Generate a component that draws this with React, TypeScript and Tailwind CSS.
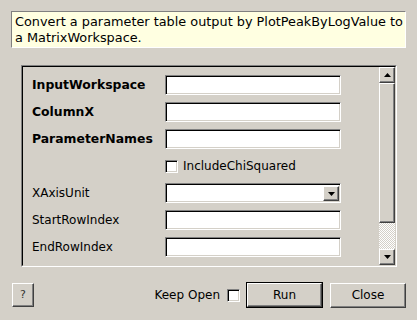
import React from 'react';

const sunken =
  'border border-t-[#808080] border-l-[#808080] border-b-white border-r-white shadow-[inset_1px_1px_0_#000,inset_-1px_-1px_0_#d4d0c8]';
const raised =
  'border border-t-white border-l-white border-b-[#404040] border-r-[#404040] shadow-[inset_-1px_-1px_0_#808080]';

function Arrow({ up }: { up?: boolean }) {
  return (
    <svg width="7" height="4" viewBox="0 0 7 4">
      <polygon points={up ? '3.5,0 7,4 0,4' : '0,0 7,0 3.5,4'} fill="#000" />
    </svg>
  );
}

function Field() {
  return <div className={`w-[176px] h-[20px] bg-white ${sunken}`} />;
}

function Combo() {
  return (
    <div className={`w-[176px] h-[20px] bg-white flex justify-end items-stretch p-[1px] pt-[2px] pl-[2px] ${sunken}`}>
      <div className={`w-[16px] bg-[#d4d0c8] flex items-center justify-center ${raised}`}>
        <Arrow />
      </div>
    </div>
  );
}

function CheckBox() {
  return <div className={`w-[13px] h-[13px] bg-white ${sunken}`} />;
}

const rows: { label: string; bold?: boolean; kind: 'field' | 'check' | 'combo' }[] = [
  { label: 'InputWorkspace', bold: true, kind: 'field' },
  { label: 'ColumnX', bold: true, kind: 'field' },
  { label: 'ParameterNames', bold: true, kind: 'field' },
  { label: '', kind: 'check' },
  { label: 'XAxisUnit', kind: 'combo' },
  { label: 'StartRowIndex', kind: 'field' },
  { label: 'EndRowIndex', kind: 'field' },
];

export default function App() {
  return (
    <div
      className="w-[417px] h-[320px] bg-[#d4d0c8] overflow-hidden text-[12px] text-black"
      style={{ fontFamily: '"DejaVu Sans", Verdana, sans-serif' }}
    >
      {/* description */}
      <div className="pt-[11px] pl-[11px]">
        <div className="w-[395px] h-[37px] bg-[#ffffe1] border border-t-[#808080] border-l-[#808080] border-b-white border-r-white pl-[3px] pt-[2px] text-[12.85px] leading-[16px]">
          Convert a parameter table output by PlotPeakByLogValue to a MatrixWorkspace.
        </div>
      </div>

      {/* property frame */}
      <div className="mt-[17px] ml-[21px] w-[376px] h-[202px] border border-t-[#808080] border-l-[#808080] border-b-white border-r-white">
        <div className="w-full h-full flex border border-t-[#000] border-l-[#000] border-b-[#d4d0c8] border-r-[#d4d0c8]">
          <div className="flex-1 flex flex-col gap-[7px] pt-[8px] pl-[9px]">
            {rows.map((r, i) => (
              <div key={i} className="flex items-center h-[20px]">
                <div className={`w-[133px] ${r.bold ? 'font-bold text-[12.4px]' : ''}`}>{r.label}</div>
                {r.kind === 'field' && <Field />}
                {r.kind === 'combo' && <Combo />}
                {r.kind === 'check' && (
                  <div className="flex items-center gap-[5px]">
                    <CheckBox />
                    <span>IncludeChiSquared</span>
                  </div>
                )}
              </div>
            ))}
          </div>
          {/* scrollbar */}
          <div className="w-[16px] flex flex-col">
            <div className={`h-[16px] bg-[#d4d0c8] flex items-center justify-center ${raised}`}>
              <Arrow up />
            </div>
            <div className={`h-[140px] bg-[#d4d0c8] ${raised}`} />
            <div className="flex-1 bg-[repeating-conic-gradient(#fff_0_25%,#d4d0c8_0_50%)] bg-[length:2px_2px]" />
            <div className={`h-[16px] bg-[#d4d0c8] flex items-center justify-center ${raised}`}>
              <Arrow />
            </div>
          </div>
        </div>
      </div>

      {/* bottom buttons */}
      <div className="mt-[15px] flex items-center pl-[12px] pr-[11px]">
        <div className={`w-[22px] h-[24px] flex items-center justify-center text-[11px] text-[#333] ${raised}`}>?</div>
        <div className="flex-1" />
        <span className="mr-[7px]">Keep Open</span>
        <CheckBox />
        <div className="ml-[6px] w-[77px] h-[26px] border border-black">
          <div className={`w-full h-full flex items-center justify-center ${raised}`}>Run</div>
        </div>
        <div className={`ml-[7px] w-[76px] h-[25px] flex items-center justify-center ${raised}`}>Close</div>
      </div>
    </div>
  );
}
